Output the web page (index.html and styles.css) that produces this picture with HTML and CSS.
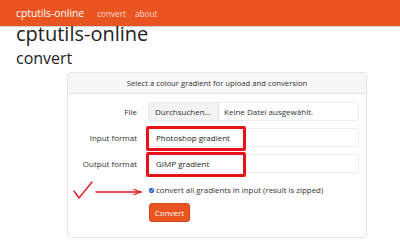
FILE: index.html
```html
<!DOCTYPE html>
<html lang="de">
<head>
<meta charset="utf-8">
<title>cptutils-online</title>
<link rel="stylesheet" href="styles.css">
</head>
<body>
<nav class="navbar">
  <span class="brand">cptutils-online</span>
  <span class="nav-link">convert</span>
  <span class="nav-link">about</span>
</nav>
<main class="container">
  <h1 class="title">cptutils-online</h1>
  <h2 class="subtitle">convert</h2>
  <section class="card">
    <div class="card-header">Select a colour gradient for upload and conversion</div>
    <form class="card-body">
      <label class="label">File</label>
      <div class="file-input">
        <span class="file-btn">Durchsuchen...</span>
        <span class="file-name">Keine Datei ausgewählt.</span>
      </div>

      <label class="label">Input format</label>
      <div class="field">
        <span class="field-text">Photoshop gradient</span>
        <span class="mark-box"></span>
      </div>

      <label class="label">Output format</label>
      <div class="field">
        <span class="field-text">GIMP gradient</span>
        <span class="mark-box"></span>
      </div>

      <div class="annot">
        <svg width="72" height="20" viewBox="0 0 72 20" fill="none" stroke="#e3161b" stroke-width="1.3" stroke-linecap="round" stroke-linejoin="round">
          <path d="M1 10 L6 17 L19 1"/>
          <path d="M23 11 L68 11"/>
          <path d="M61 8.5 L68 11 L61 13.5"/>
        </svg>
      </div>
      <div class="check-row">
        <input type="checkbox" class="check" checked>
        <span class="check-label">convert all gradients in input (result is zipped)</span>
      </div>

      <div></div>
      <div class="btn-row"><button type="button" class="btn">Convert</button></div>
    </form>
  </section>
</main>
</body>
</html>
```
FILE: styles.css
```css
* { box-sizing: border-box; }
body {
  margin: 0;
  font-family: "Open Sans", "Noto Sans", sans-serif;
  color: #333;
  background: #fff;
}
.navbar {
  height: 26px;
  background: #e95420;
  display: flex;
  align-items: center;
  padding-left: 16px;
  box-shadow: 0 1px 1px rgba(0,0,0,0.18);
}
.brand {
  color: #fff;
  font-size: 10.3px;
  margin-right: 13px;
}
.nav-link {
  color: rgba(255,255,255,0.78);
  font-size: 8.2px;
  margin-right: 9px;
}
.container {
  padding: 0 16px;
}
.title {
  margin: -3px 0 0;
  font-size: 20px;
  font-weight: 400;
  line-height: 22px;
  color: #222;
}
.subtitle {
  margin: 4px 0 0;
  font-size: 16px;
  font-weight: 400;
  line-height: 18px;
  color: #222;
}
.card {
  margin: 5px 0 0 51px;
  width: 300px;
  border: 1px solid #e4e4e4;
  border-radius: 4px;
}
.card-header {
  height: 21px;
  background: #f7f7f7;
  border-bottom: 1px solid #e4e4e4;
  font-size: 7.7px;
  display: flex;
  align-items: center;
  justify-content: center;
  border-radius: 4px 4px 0 0;
}
.card-body {
  display: grid;
  grid-template-columns: 69px 211px;
  column-gap: 11px;
  row-gap: 7px;
  padding: 8px 7px 15px 0;
  margin: 0;
  align-items: center;
}
.label {
  font-size: 8px;
  text-align: right;
}
.file-input, .field {
  position: relative;
  height: 19px;
  border: 1px solid #ececec;
  border-radius: 3px;
  display: flex;
  align-items: center;
  font-size: 8px;
}
.file-btn {
  height: 100%;
  display: flex;
  align-items: center;
  padding: 0 6px;
  background: #f3f3f3;
  border-right: 1px solid #e6e6e6;
  width: 70px;
}
.file-name { padding-left: 5px; }
.field-text { padding-left: 7px; color: #222; }
.mark-box {
  position: absolute;
  left: -3px;
  top: -3px;
  width: 100px;
  height: 25px;
  border: 3.5px solid #e8101a;
  border-radius: 2px;
}
.annot {
  height: 10px;
  padding-left: 5px;
  margin-top: 5px;
}
.annot svg { display: block; overflow: visible; margin-top: -4px; }
.check-row {
  height: 10px;
  display: flex;
  align-items: center;
  margin-top: 5px;
  font-size: 7.9px;
}
.check {
  width: 5px;
  height: 5px;
  margin: 0 2px 0 1px;
  accent-color: #1a5fd0;
}
.btn-row { margin-top: 1px; }
.btn {
  display: block;
  font-family: inherit;
  font-size: 8px;
  color: #fff;
  background: #e95420;
  border: 1px solid #d0461a;
  border-radius: 3px;
  height: 19px;
  width: 41px;
  padding: 0;
  margin-left: 1px;
}
```
